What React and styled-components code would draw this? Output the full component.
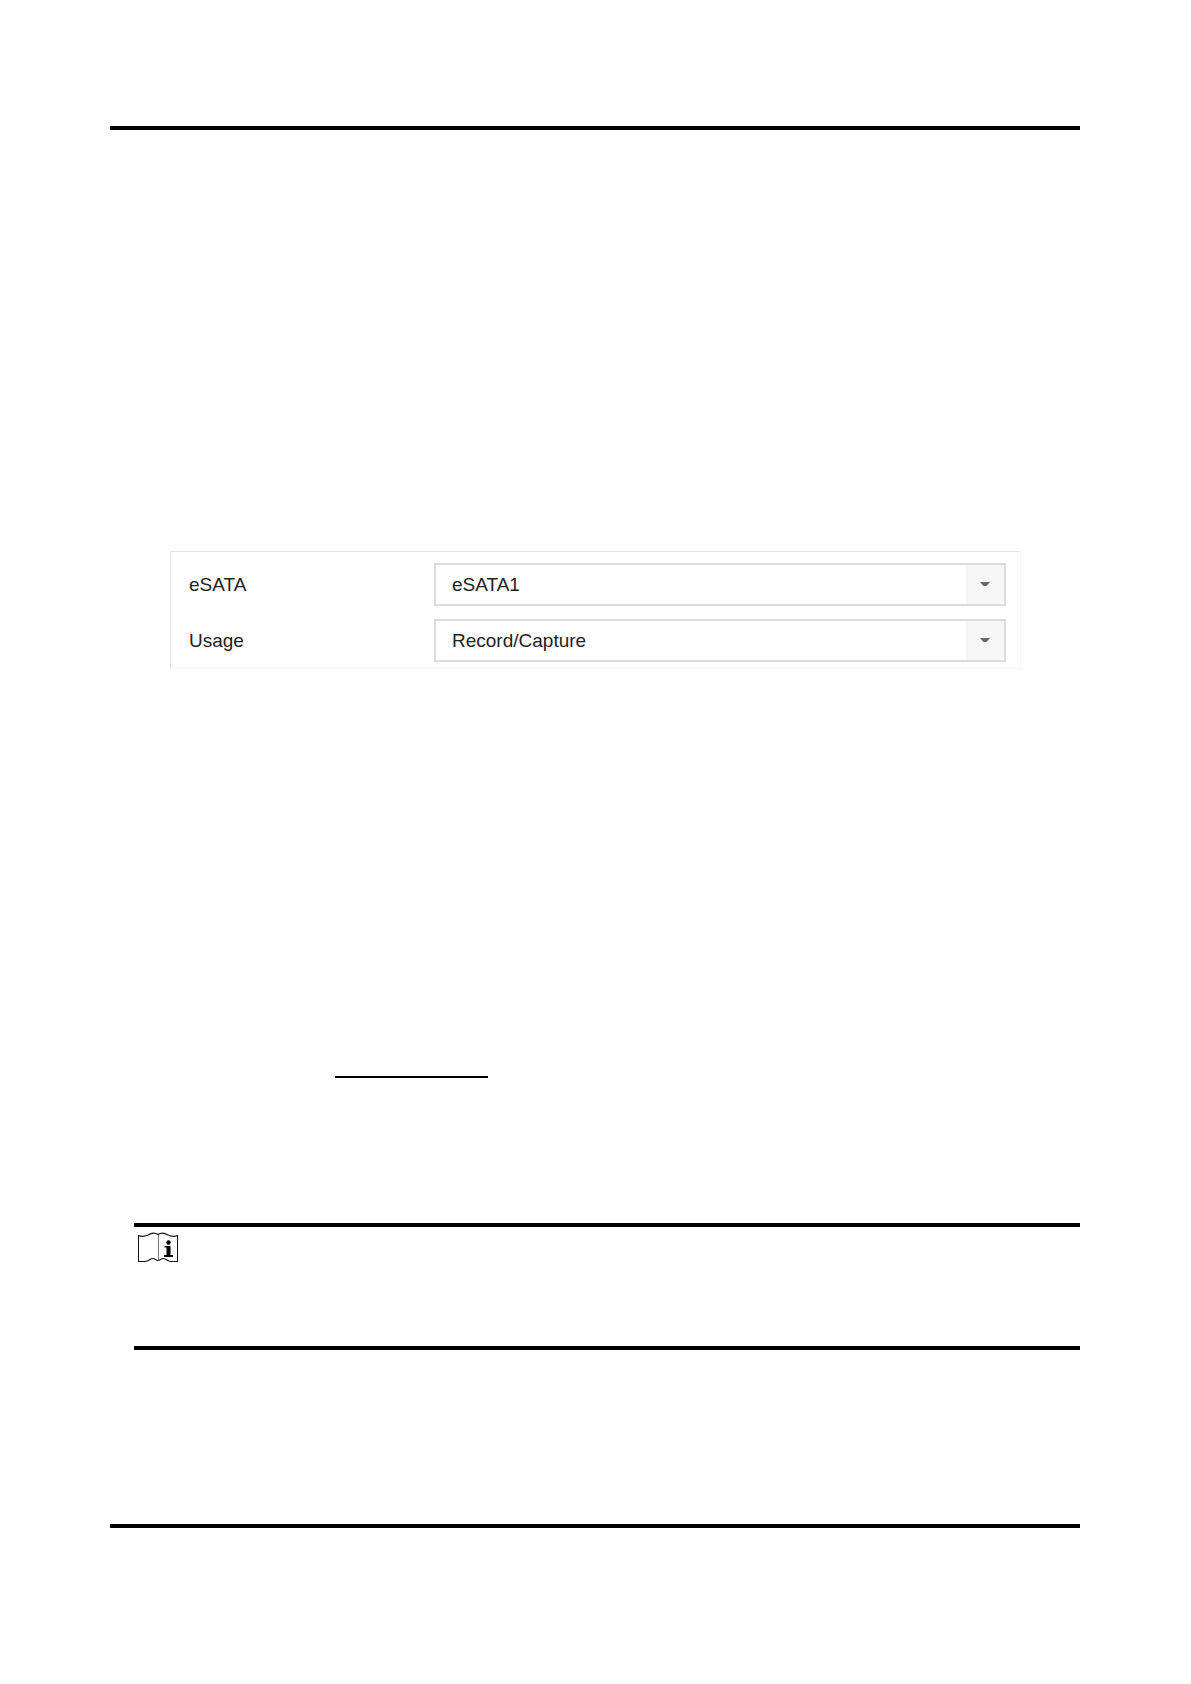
import React, { useState } from 'react'
import styled, { createGlobalStyle } from 'styled-components'

const GlobalStyle = createGlobalStyle`
	* {
		box-sizing: border-box;
	}
	body {
		margin: 0;
		background: #fff;
		font-family: "Liberation Sans", Arial, sans-serif;
	}
`
const Page = styled.main`
	display: flex;
	flex-direction: column;
	min-height: 100vh;
	padding: 126px 111px 156px 110px;
`
const Rule = styled.hr`
	width: 100%;
	height: 4px;
	margin: 0;
	border: 0;
	background: #000;
`
const Panel = styled.form`
	display: flex;
	flex-direction: column;
	gap: 13px;
	margin: 421px 59px 0 60px;
	padding: 11px 14px 6px 18px;
	border: 1px solid #f6f6f6;
	border-top-color: #e4e4e4;
	border-left-color: #e4e4e4;
`
const Row = styled.div`
	display: grid;
	grid-template-columns: 245px 1fr;
	align-items: center;
`
const Label = styled.label`
	color: #222;
	font-size: 19px;
	line-height: 24px;
`
const SelectBox = styled.div`
	position: relative;
	display: flex;
	height: 43px;
	border: 2px solid #dcdcdc;
`
const Select = styled.select`
	appearance: none;
	flex: 1;
	min-width: 0;
	padding: 0 54px 0 16px;
	border: 0;
	background: linear-gradient(#f6f6f6, #f6f6f6) right / 38px 100% no-repeat #fff;
	color: #222;
	font-family: inherit;
	font-size: 19px;
	line-height: 24px;
`
const Arrow = styled.svg`
	position: absolute;
	top: 16px;
	right: 14px;
	pointer-events: none;
`
const Blank = styled.div`
	width: 153px;
	height: 2px;
	margin: 407px 0 145px 225px;
	background: #000;
`
const Note = styled.section`
	margin: 0 0 174px 24px;
`
const NoteBody = styled.div`
	height: 119px;
	padding: 5px 3px;
`

const SelectField = ({ name, label, options }) => {
	const [value, setValue] = useState(options[0])

	return (
		<Row>
			<Label htmlFor={name}>{label}</Label>
			<SelectBox>
				<Select id={name} name={name} value={value} onChange={e => setValue(e.target.value)}>
					{
						options.map((option) => {
							return <option key={option}>{option}</option>
						})
					}
				</Select>
				<Arrow width="10" height="6" viewBox="0 0 10 6" aria-hidden="true">
					<path d="M0 1H10L6.500 5H3.500Z" fill="#666" />
				</Arrow>
			</SelectBox>
		</Row>
	)
}

// open manual with an "i" on the right page
const BookIcon = () => (
	<svg width="42" height="34" viewBox="0 0 42 34" role="img" aria-label="Note">
		<g fill="none" stroke="#111">
			<path d="M1.500 3V29.500M40.500 3V29.500" strokeWidth="1" />
			<path d="M21.500 3V28" stroke="#777" strokeWidth="1" />
			<path d="M1 3.500C5 5 8 4.500 11 3C14 1 18 .500 21 2.500C24 .500 28 1 31 3C34 4.500 37 5 41 3.500" strokeWidth="1.200" />
			<path d="M1 29.500H8C12 29.500 13 26.500 16 26.500C18 26.500 19 28.500 21 28.500C23 28.500 24 26.500 26 26.500C29 26.500 30 29.500 34 29.500H41" strokeWidth="1.200" />
		</g>
		<circle cx="31.500" cy="10.500" r="2.200" fill="#000" />
		<path d="M27.500 14H33.500V23H36V25H27V23H29.500V15.500H27.500Z" fill="#000" />
	</svg>
)

const App = () => {
	return (
		<>
			<GlobalStyle />
			<Page>
				<Rule />
				<Panel>
					<SelectField name="esata" label="eSATA" options={['eSATA1']} />
					<SelectField name="usage" label="Usage" options={['Record/Capture']} />
				</Panel>
				<Blank />
				<Note>
					<Rule />
					<NoteBody>
						<BookIcon />
					</NoteBody>
					<Rule />
				</Note>
				<Rule />
			</Page>
		</>
	)
}

export default App
